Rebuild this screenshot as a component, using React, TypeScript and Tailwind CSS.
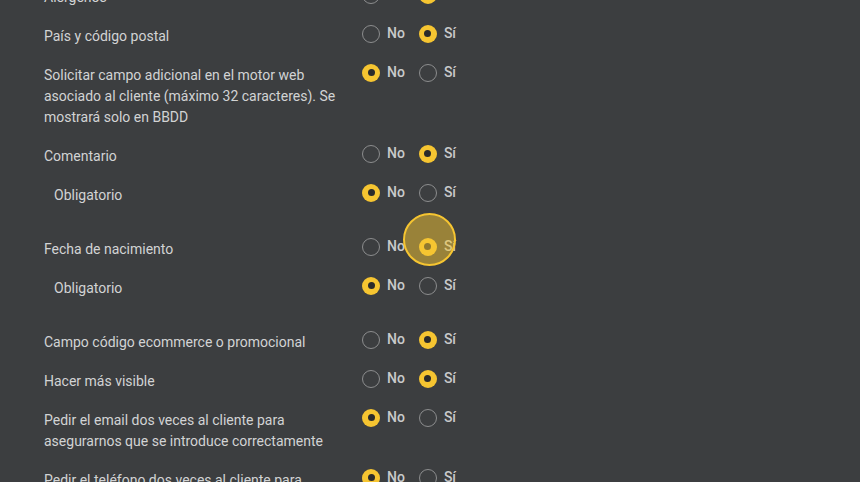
import React from 'react';

type Row = {
  label: string;
  value: 'no' | 'si';
  sub?: boolean;
};

type Group = Row[];

const groups: Group[] = [
  [{ label: 'Alergenos', value: 'si' }],
  [{ label: 'País y código postal', value: 'si' }],
  [
    {
      label:
        'Solicitar campo adicional en el motor web asociado al cliente (máximo 32 caracteres). Se mostrará solo en BBDD',
      value: 'no',
    },
  ],
  [
    { label: 'Comentario', value: 'si' },
    { label: 'Obligatorio', value: 'no', sub: true },
  ],
  [
    { label: 'Fecha de nacimiento', value: 'si' },
    { label: 'Obligatorio', value: 'no', sub: true },
  ],
  [{ label: 'Campo código ecommerce o promocional', value: 'si' }],
  [{ label: 'Hacer más visible', value: 'si' }],
  [{ label: 'Pedir el email dos veces al cliente para asegurarnos que se introduce correctamente', value: 'no' }],
  [{ label: 'Pedir el teléfono dos veces al cliente para asegurarnos que se introduce correctamente', value: 'no' }],
];

const Radio = ({ checked, label }: { checked: boolean; label: string }) => (
  <label className="flex items-center gap-[7px] cursor-pointer">
    {checked ? (
      <span className="w-[18px] h-[18px] rounded-full bg-[#f6c531] flex items-center justify-center">
        <span className="w-[7px] h-[7px] rounded-full bg-[#2b2b2b]" />
      </span>
    ) : (
      <span className="w-[18px] h-[18px] rounded-full border-[1.5px] border-[#8c8d8e]" />
    )}
    <span className="text-[14px] font-medium text-[#c9cacb]">{label}</span>
  </label>
);

const OptionRow = ({ row }: { row: Row }) => (
  <div className="flex items-start">
    <div className={`w-[318px] pr-[12px] ${row.sub ? 'pl-[10px]' : ''}`}>
      <p className="text-[14px] leading-[21px] text-[#d2d3d4]">{row.label}</p>
    </div>
    <div className="flex items-center gap-[14px] h-[21px] -mt-[3px]">
      <Radio checked={row.value === 'no'} label="No" />
      <Radio checked={row.value === 'si'} label="Sí" />
    </div>
  </div>
);

const App = () => {
  return (
    <div
      className="relative w-full h-[482px] overflow-hidden bg-[#3c3e40]"
      style={{ fontFamily: 'Roboto, "Liberation Sans", sans-serif' }}
    >
      <div className="flex flex-col gap-[18px] pl-[44px] -mt-[13px]">
        {groups.map((group, i) => (
          <div key={i} className={`flex flex-col gap-[18px] ${group.length > 1 ? 'pb-[15px]' : ''}`}>
            {group.map((row, j) => (
              <OptionRow key={j} row={row} />
            ))}
          </div>
        ))}
      </div>

      {/* click indicator */}
      <div className="absolute left-[403px] top-[213px] w-[53px] h-[53px] rounded-full bg-[#f6c531]/50 border-2 border-[#f6c531] pointer-events-none" />
    </div>
  );
};

export default App;
